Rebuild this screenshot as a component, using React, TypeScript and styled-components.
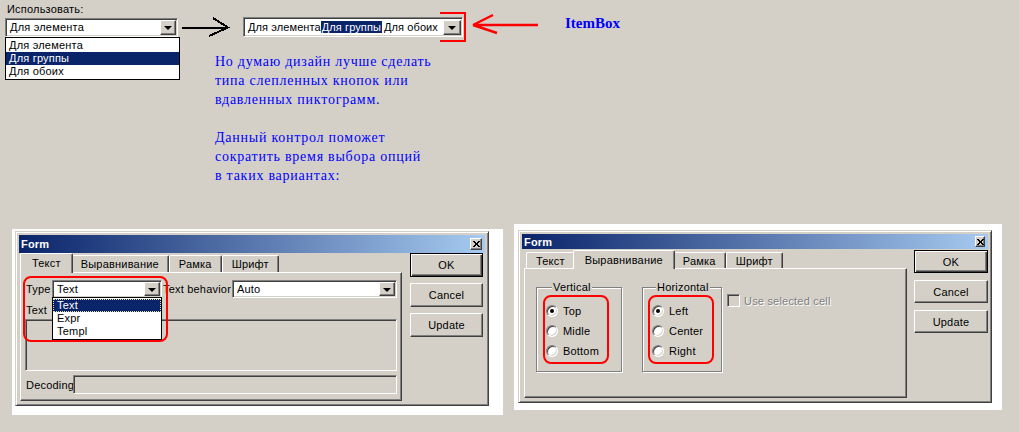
import React from "react";
import styled, { createGlobalStyle, css } from "styled-components";

const Global = createGlobalStyle`
  html, body { margin: 0; padding: 0; background: #d4d0c8; }
  body { font-family: "Liberation Sans", Arial, sans-serif; font-size: 11px; letter-spacing: 0.2px; color: #000; }
  #root { width: 1019px; height: 432px; overflow: hidden; }
`;

const sunken = css`
  box-sizing: border-box;
  border: 1px solid;
  border-color: #808080 #fff #fff #808080;
  box-shadow: inset 1px 1px 0 #404040, inset -1px -1px 0 #d4d0c8;
`;

const raised = css`
  box-sizing: border-box;
  border: 1px solid;
  border-color: #fff #404040 #404040 #fff;
  box-shadow: inset -1px -1px 0 #808080;
  background: #d4d0c8;
`;

const Page = styled.div`
  width: 1019px;
  height: 432px;
  background: #d4d0c8;
  display: flex;
  flex-direction: column;
`;

const Top = styled.div`
  display: flex;
  height: 224px;
  flex: none;
`;

const UseCol = styled.div`
  width: 175px;
  padding: 2px 0 0 5px;
  display: flex;
  flex-direction: column;
`;

const FieldLabel = styled.div`
  height: 14px;
  line-height: 14px;
  padding-left: 2px;
  margin-bottom: 2px;
`;

const Combo = styled.div<{ $w: number; $h: number; $bg?: string }>`
  ${sunken};
  position: relative;
  width: ${(p) => p.$w}px;
  height: ${(p) => p.$h}px;
  background: ${(p) => p.$bg || "#fff"};
  padding: 1px;
  display: flex;
  align-items: center;
  flex: none;
  white-space: nowrap;
`;

const ComboText = styled.span`
  flex: 1;
  padding-left: 3px;
  line-height: 13px;
  overflow: hidden;
`;

const DropBtn = styled.span<{ $w: number; $h: number }>`
  ${raised};
  width: ${(p) => p.$w}px;
  height: ${(p) => p.$h}px;
  display: flex;
  align-items: center;
  justify-content: center;
  flex: none;
  margin-left: auto;
  &::before {
    content: "";
    border-left: 4px solid transparent;
    border-right: 4px solid transparent;
    border-top: 4px solid #000;
    margin-top: 1px;
  }
`;

const ListBox = styled.div<{ $w: number }>`
  box-sizing: border-box;
  width: ${(p) => p.$w}px;
  border: 1px solid #000;
  background: #fff;
  padding: 1px 0;
`;

const ListItem = styled.div<{ $sel?: boolean; $focus?: boolean; $pad?: number }>`
  height: 13px;
  line-height: 13px;
  padding-left: ${(p) => p.$pad ?? 3}px;
  white-space: nowrap;
  ${(p) =>
    p.$sel &&
    css`
      background: #0a246a;
      color: #fff;
    `}
  ${(p) =>
    p.$focus &&
    css`
      outline: 1px dotted #e8e0a0;
      outline-offset: -1px;
    `}
`;

const RightCol = styled.div`
  display: flex;
  flex-direction: column;
  padding-top: 12px;
`;

const AnnoRow = styled.div`
  display: flex;
  align-items: center;
  height: 30px;
`;

const ArrowSvg = styled.svg<{ $ml: number }>`
  display: block;
  margin-left: ${(p) => p.$ml}px;
  flex: none;
`;

const ItemBoxWrap = styled.div`
  position: relative;
  margin-left: 11px;
  &::after {
    content: "";
    position: absolute;
    left: 197px;
    top: -5px;
    width: 24px;
    height: 26px;
    border: 2px solid #ff0000;
    border-left: none;
  }
`;

const Seg = styled.span<{ $sel?: boolean; $ml?: number }>`
  line-height: 13px;
  letter-spacing: 0.1px;
  margin-left: ${(p) => p.$ml ?? 0}px;
  ${(p) =>
    p.$sel &&
    css`
      background: #0a246a;
      color: #fff;
      padding: 0 1px;
    `}
`;

const ItemBoxLabel = styled.div`
  margin: 0 0 7px 27px;
  font-family: "Liberation Serif", "Times New Roman", serif;
  font-weight: bold;
  font-size: 15px;
  letter-spacing: 0;
  color: #0000ff;
`;

const Note = styled.div`
  margin: 10px 0 0 35px;
  font-family: "Liberation Serif", "Times New Roman", serif;
  font-size: 14px;
  letter-spacing: 0.75px;
  line-height: 19px;
  color: #0000ff;
  white-space: pre;
`;

const Bottom = styled.div`
  display: flex;
  align-items: flex-start;
`;

const Shot = styled.div<{ $m: string; $p: string }>`
  background: #fff;
  margin: ${(p) => p.$m};
  padding: ${(p) => p.$p};
  flex: none;
`;

const Win = styled.div`
  box-sizing: border-box;
  width: 474px;
  border: 1px solid;
  border-color: #d4d0c8 #404040 #404040 #d4d0c8;
  box-shadow: inset 1px 1px 0 #fff, inset -1px -1px 0 #808080;
  background: #d4d0c8;
  padding: 3px 3px 4px 3px;
`;

const TitleBar = styled.div<{ $h: number }>`
  height: ${(p) => p.$h}px;
  background: linear-gradient(90deg, #0a246a 0%, #a6caf0 100%);
  display: flex;
  align-items: center;
  padding: 0 3px 0 2px;
  color: #fff;
  font-weight: bold;
  font-size: 11px;
`;

const TitleText = styled.span`
  flex: 1;
`;

const CloseBtn = styled.span<{ $w: number; $h: number }>`
  ${raised};
  width: ${(p) => p.$w}px;
  height: ${(p) => p.$h}px;
  display: flex;
  align-items: center;
  justify-content: center;
`;

const Body = styled.div<{ $mt: number; $ml: number; $gap: number }>`
  display: flex;
  align-items: flex-start;
  margin-top: ${(p) => p.$mt}px;
  padding-left: ${(p) => p.$ml}px;
  gap: ${(p) => p.$gap}px;
`;

const TabArea = styled.div<{ $w: number }>`
  width: ${(p) => p.$w}px;
  display: flex;
  flex-direction: column;
`;

const TabRow = styled.div<{ $h: number }>`
  display: flex;
  align-items: flex-end;
  height: ${(p) => p.$h}px;
  padding-left: 2px;
`;

const Tab = styled.div<{ $active?: boolean }>`
  box-sizing: border-box;
  height: calc(100% - 2px);
  padding: 0 9px;
  display: flex;
  align-items: center;
  white-space: nowrap;
  background: #d4d0c8;
  border-top: 1px solid #fff;
  border-left: 1px solid #fff;
  border-right: 1px solid #404040;
  box-shadow: inset -1px 0 0 #808080;
  border-radius: 2px 2px 0 0;
  ${(p) =>
    p.$active &&
    css`
      height: calc(100% + 1px);
      margin: 0 -2px -1px -2px;
      padding: 0 11px 1px;
      position: relative;
      z-index: 1;
    `}
`;

const Panel = styled.div<{ $h: number }>`
  position: relative;
  box-sizing: border-box;
  height: ${(p) => p.$h}px;
  border: 1px solid;
  border-color: #fff #404040 #404040 #fff;
  box-shadow: inset -1px -1px 0 #808080;
`;

const LeftPanelInner = styled.div`
  padding: 7px 0 0 5px;
  display: flex;
  flex-direction: column;
`;

const FormRow = styled.div<{ $h: number; $mt?: number }>`
  display: flex;
  align-items: center;
  height: ${(p) => p.$h}px;
  margin-top: ${(p) => p.$mt ?? 0}px;
`;

const Lbl = styled.span<{ $w?: number; $ml?: number }>`
  ${(p) => (p.$w ? `width: ${p.$w}px;` : "")}
  margin-left: ${(p) => p.$ml ?? 0}px;
  flex: none;
  white-space: nowrap;
`;

const DropList = styled.div`
  position: absolute;
  left: -1px;
  top: 100%;
  z-index: 2;
`;

const SmallLabel = styled.div`
  height: 14px;
  line-height: 14px;
  margin-top: 5px;
`;

const Area = styled.div<{ $w: number; $h: number; $ml?: number; $mt?: number }>`
  ${sunken};
  width: ${(p) => p.$w}px;
  height: ${(p) => p.$h}px;
  margin-left: ${(p) => p.$ml ?? 0}px;
  margin-top: ${(p) => p.$mt ?? 0}px;
  background: #d4d0c8;
  flex: none;
`;

const RedBox = styled.div<{ $l: number; $t: number; $w: number; $h: number }>`
  position: absolute;
  left: ${(p) => p.$l}px;
  top: ${(p) => p.$t}px;
  width: ${(p) => p.$w}px;
  height: ${(p) => p.$h}px;
  box-sizing: border-box;
  border: 2px solid #ff0000;
  border-radius: 8px;
  pointer-events: none;
  z-index: 3;
`;

const BtnCol = styled.div<{ $gap: number }>`
  display: flex;
  flex-direction: column;
  gap: ${(p) => p.$gap}px;
`;

const Btn = styled.div<{ $w: number; $h: number; $def?: boolean }>`
  ${raised};
  width: ${(p) => p.$w}px;
  height: ${(p) => p.$h}px;
  display: flex;
  align-items: center;
  justify-content: center;
  ${(p) =>
    p.$def &&
    css`
      border: 1px solid #000;
      box-shadow: inset 1px 1px 0 #fff, inset -1px -1px 0 #404040, inset -2px -2px 0 #808080;
    `}
`;

const RightPanelInner = styled.div`
  padding: 12px 0 0 11px;
  display: flex;
  align-items: flex-start;
`;

const GroupWrap = styled.div<{ $ml?: number }>`
  position: relative;
  margin-left: ${(p) => p.$ml ?? 0}px;
`;

const Group = styled.fieldset<{ $w: number }>`
  box-sizing: border-box;
  width: ${(p) => p.$w}px;
  height: 91px;
  margin: 0;
  padding: 7px 0 0 9px;
  border: 1px solid #808080;
  box-shadow: 1px 1px 0 #fff, inset 1px 1px 0 #fff;
  min-width: 0;
`;

const Legend = styled.legend<{ $ml: number }>`
  margin-left: ${(p) => p.$ml}px;
  padding: 0 1px;
  line-height: 13px;
  background: #d4d0c8;
`;

const RadioRow = styled.div`
  display: flex;
  align-items: center;
  gap: 5px;
  height: 20px;
`;

const Radio = styled.span<{ $checked?: boolean }>`
  box-sizing: border-box;
  width: 12px;
  height: 12px;
  border-radius: 50%;
  background: #fff;
  border: 1px solid;
  border-color: #808080 #fff #fff #808080;
  box-shadow: inset 1px 1px 0 #404040, inset -1px -1px 0 #d4d0c8;
  position: relative;
  flex: none;
  ${(p) =>
    p.$checked &&
    css`
      &::after {
        content: "";
        position: absolute;
        left: 3px;
        top: 3px;
        width: 4px;
        height: 4px;
        border-radius: 50%;
        background: #000;
      }
    `}
`;

const CheckRow = styled.div`
  display: flex;
  align-items: center;
  gap: 4px;
  margin: 13px 0 0 5px;
`;

const CheckBox = styled.span`
  ${sunken};
  width: 13px;
  height: 13px;
  background: #d4d0c8;
`;

const Disabled = styled.span`
  color: #808080;
  text-shadow: 1px 1px 0 #fff;
`;

const CloseX = () => (
  <svg width="7" height="6" viewBox="0 0 7 6" shapeRendering="crispEdges">
    <path d="M0 0h2v1h-2zM1 1h2v1h-2zM2 2h3v2h-3zM1 4h2v1h-2zM0 5h2v1h-2zM5 0h2v1h-2zM4 1h2v1h-2zM4 4h2v1h-2zM5 5h2v1h-2z" fill="#000" />
  </svg>
);

const LeftDialog = () => (
  <Win>
    <TitleBar $h={18}>
      <TitleText>Form</TitleText>
      <CloseBtn $w={12} $h={12}>
        <CloseX />
      </CloseBtn>
    </TitleBar>
    <Body $mt={0} $ml={1} $gap={8}>
      <TabArea $w={382}>
        <TabRow $h={19}>
          <Tab $active>Текст</Tab>
          <Tab>Выравнивание</Tab>
          <Tab>Рамка</Tab>
          <Tab>Шрифт</Tab>
        </TabRow>
        <Panel $h={129}>
          <RedBox $l={2} $t={3} $w={145} $h={66} />
          <LeftPanelInner>
            <FormRow $h={18}>
              <Lbl $w={26}>Type</Lbl>
              <Combo $w={110} $h={18}>
                <ComboText>Text</ComboText>
                <DropBtn $w={16} $h={14} />
                <DropList>
                  <ListBox $w={110}>
                    <ListItem $sel $focus $pad={4}>
                      Text
                    </ListItem>
                    <ListItem $pad={4}>Expr</ListItem>
                    <ListItem $pad={4}>Templ</ListItem>
                  </ListBox>
                </DropList>
              </Combo>
              <Lbl $w={69} $ml={1}>
                Text behavior
              </Lbl>
              <Combo $w={165} $h={18}>
                <ComboText>Auto</ComboText>
                <DropBtn $w={16} $h={14} />
              </Combo>
            </FormRow>
            <SmallLabel>Text</SmallLabel>
            <Area $w={372} $h={52} $ml={-1} $mt={2} />
            <FormRow $h={19} $mt={4}>
              <Lbl $w={47}>Decoding</Lbl>
              <Area $w={324} $h={19} />
            </FormRow>
          </LeftPanelInner>
        </Panel>
      </TabArea>
      <BtnCol $gap={6}>
        <Btn $w={73} $h={24} $def>
          OK
        </Btn>
        <Btn $w={73} $h={24}>
          Cancel
        </Btn>
        <Btn $w={73} $h={24}>
          Update
        </Btn>
      </BtnCol>
    </Body>
  </Win>
);

const RightDialog = () => (
  <Win>
    <TitleBar $h={15}>
      <TitleText>Form</TitleText>
      <CloseBtn $w={10} $h={11}>
        <CloseX />
      </CloseBtn>
    </TitleBar>
    <Body $mt={1} $ml={2} $gap={7}>
      <TabArea $w={383}>
        <TabRow $h={18}>
          <Tab>Текст</Tab>
          <Tab $active>Выравнивание</Tab>
          <Tab>Рамка</Tab>
          <Tab>Шрифт</Tab>
        </TabRow>
        <Panel $h={130}>
          <RightPanelInner>
            <GroupWrap>
              <Group $w={86}>
                <Legend $ml={6}>Vertical</Legend>
                <RadioRow>
                  <Radio $checked />
                  Top
                </RadioRow>
                <RadioRow>
                  <Radio />
                  Midle
                </RadioRow>
                <RadioRow>
                  <Radio />
                  Bottom
                </RadioRow>
              </Group>
              <RedBox $l={7} $t={14} $w={66} $h={69} />
            </GroupWrap>
            <GroupWrap $ml={20}>
              <Group $w={80}>
                <Legend $ml={4}>Horizontal</Legend>
                <RadioRow>
                  <Radio $checked />
                  Left
                </RadioRow>
                <RadioRow>
                  <Radio />
                  Center
                </RadioRow>
                <RadioRow>
                  <Radio />
                  Right
                </RadioRow>
              </Group>
              <RedBox $l={6} $t={14} $w={66} $h={69} />
            </GroupWrap>
            <CheckRow>
              <CheckBox />
              <Disabled>Use selected cell</Disabled>
            </CheckRow>
          </RightPanelInner>
        </Panel>
      </TabArea>
      <BtnCol $gap={7}>
        <Btn $w={74} $h={23} $def>
          OK
        </Btn>
        <Btn $w={74} $h={23}>
          Cancel
        </Btn>
        <Btn $w={74} $h={23}>
          Update
        </Btn>
      </BtnCol>
    </Body>
  </Win>
);

export default function App() {
  return (
    <Page>
      <Global />
      <Top>
        <UseCol>
          <FieldLabel>Использовать:</FieldLabel>
          <Combo $w={173} $h={19}>
            <ComboText>Для элемента</ComboText>
            <DropBtn $w={16} $h={15} />
          </Combo>
          <ListBox $w={175}>
            <ListItem>Для элемента</ListItem>
            <ListItem $sel>Для группы</ListItem>
            <ListItem>Для обоих</ListItem>
          </ListBox>
        </UseCol>
        <RightCol>
          <AnnoRow>
            <ArrowSvg $ml={2} width="50" height="30" viewBox="0 0 50 30" shapeRendering="crispEdges">
              <path d="M0 15.5H46M31 6L46 15.5L27 24" stroke="#000" strokeWidth="2" fill="none" />
            </ArrowSvg>
            <ItemBoxWrap>
              <Combo $w={220} $h={20}>
                <ComboText>
                  <Seg>Для элемента</Seg>
                  <Seg $sel>Для группы</Seg>
                  <Seg $ml={2}>Для обоих</Seg>
                </ComboText>
                <DropBtn $w={18} $h={15} />
              </Combo>
            </ItemBoxWrap>
            <ArrowSvg $ml={9} width="66" height="30" viewBox="0 0 66 30">
              <path d="M1 13H66M1 13L21 3M1 13L25 21" stroke="#ff0000" strokeWidth="2.5" fill="none" />
            </ArrowSvg>
            <ItemBoxLabel>ItemBox</ItemBoxLabel>
          </AnnoRow>
          <Note>{`Но думаю дизайн лучше сделать
типа слепленных кнопок или
вдавленных пиктограмм.

Данный контрол поможет
сократить время выбора опций
в таких вариантах:`}</Note>
        </RightCol>
      </Top>
      <Bottom>
        <Shot $m="5px 0 0 12px" $p="2px 14px 9px 3px">
          <LeftDialog />
        </Shot>
        <Shot $m="0 0 0 11px" $p="6px 10px 7px 4px">
          <RightDialog />
        </Shot>
      </Bottom>
    </Page>
  );
}
